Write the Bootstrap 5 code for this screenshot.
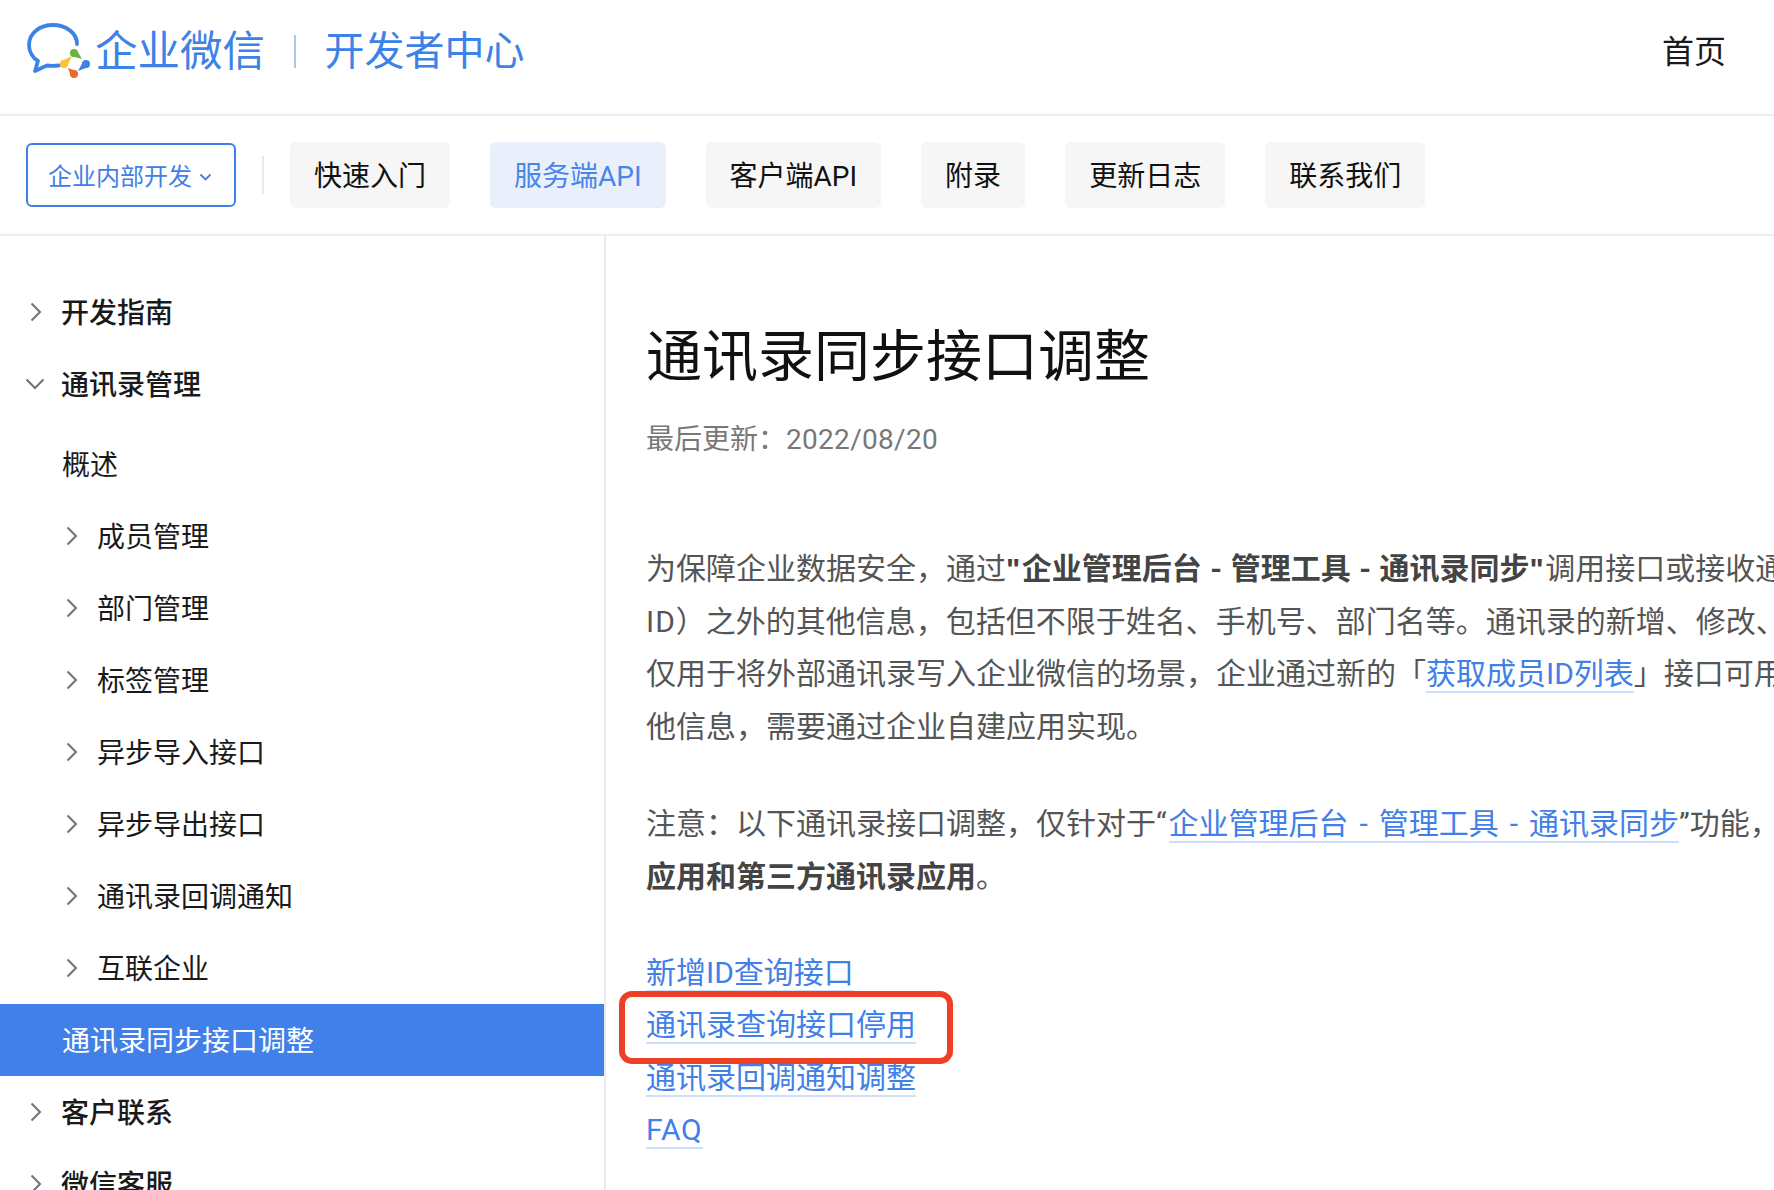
<!DOCTYPE html>
<html lang="zh-CN">
<head>
<meta charset="utf-8">
<title>通讯录同步接口调整</title>
<link href="https://cdn.jsdelivr.net/npm/bootstrap@5.3.0/dist/css/bootstrap.min.css" rel="stylesheet">
<style>
html,body{height:100%;overflow:hidden;}
body{font-family:Roboto,"Noto Sans CJK SC",sans-serif;color:#1a1a1a;background:#fff;font-size:28px;}
.wx-top{height:116px;border-bottom:2px solid #eee;padding:0 48px 11px 26px;}
.wx-logo-icon{width:64px;height:60px;margin-top:-3px;}
.wx-brand{font-size:42.5px;line-height:56px;color:#3d82e6;margin-left:5px;}
.wx-brand-sep{width:2px;height:33px;background:#a8c8f2;margin:0 28.5px 0 29px;}
.wx-brand-sub{font-size:40px;line-height:56px;color:#3d82e6;}
.wx-home{font-size:32px;line-height:40px;color:#1a1a1a;text-decoration:none;}
.wx-sub{height:120px;border-bottom:2px solid #eee;padding:0 26px;}
.wx-scope{width:210px;height:64px;border:2px solid #3f80e8;border-radius:6px;color:#3f80e8;font-size:24px;padding:4px 2px 0 0;background:#fff;}
.wx-scope:hover{color:#3f80e8;background:#fff;border-color:#3f80e8;}
.wx-scope svg{width:13px;height:8px;margin-left:7px;}
.wx-sep{width:2px;height:38px;background:#e8e8e8;margin:0 26px;}
.wx-tabs{gap:40px;}
.wx-tab{height:66px;line-height:63px;padding:3px 24px 0;font-size:28px;border-radius:6px;background:#f6f6f6;color:#111;border:0;}
.wx-tab:hover{background:#f6f6f6;color:#111;}
.wx-tab-on,.wx-tab-on:hover{background:#e9f0fc;color:#4a86e8;}
.wx-body{height:954px;}
.wx-side{width:606px;flex:none;border-right:2px solid #e9e9e9;padding-top:40px;height:100%;}
.wx-item{height:72px;line-height:69px;padding-top:3px;font-size:28px;color:#1a1a1a;text-decoration:none;position:relative;white-space:nowrap;}
.wx-l0{padding-left:61px;font-weight:500;}
.wx-l1{padding-left:97px;}
.wx-l1b{padding-left:62px;}
.wx-on{background:#4080e8;color:#fff;}
.wx-subnav{padding-top:8px;}
.wx-chev{position:absolute;top:50%;transform:translateY(-50%);}
.wx-chev-r{width:12px;height:20px;left:30px;}
.wx-l1 .wx-chev-r{left:66px;}
.wx-chev-d{width:20px;height:12px;left:25px;}
.wx-main{padding:81px 0 0 40px;white-space:nowrap;min-width:0;overflow:hidden;}
.wx-title{font-size:56px;line-height:80px;font-weight:400;color:#111;margin:0 0 23px;}
.wx-date{font-size:28px;line-height:40px;color:#787878;margin:0 0 83px;}
.wx-date span{letter-spacing:.3px;}
.wx-para{font-size:30px;line-height:52.6px;color:#555;margin:0 0 45px;}
.wx-para b{font-weight:700;color:#444;word-spacing:1.1px;}
.wx-q{font-family:"Liberation Sans",sans-serif;letter-spacing:1.5px;}
.wx-lq{letter-spacing:2px;}
.wx-idfix{letter-spacing:1px;}
.wx-link{color:#4080e8;text-decoration:none;border-bottom:2px solid #cddffa;}
.wx-para .wx-link{word-spacing:3.5px;}
.wx-faq{letter-spacing:.8px;}
.wx-links{font-size:30px;line-height:52.6px;margin-top:43px;position:relative;width:max-content;}
.wx-mark{position:absolute;left:-27px;top:44px;width:334px;height:73px;border:6px solid #ee4024;border-radius:13px;pointer-events:none;}
</style>
</head>
<body>
<header class="wx-top d-flex align-items-center justify-content-between">
  <div class="d-flex align-items-center">
    <svg class="wx-logo-icon" viewBox="0 0 64 60" xmlns="http://www.w3.org/2000/svg">
      <path d="M51 24 C51 13 40 5 27 5 C14 5 3 13 3 25 C3 32 7 38 12 41 L9 51 L21 45.500 C24.500 46 28 46 33 45.500" fill="none" stroke="#3d82e6" stroke-width="3.800" stroke-linejoin="round" stroke-linecap="round"/>
      <circle cx="48" cy="33" r="4" fill="#6ab43c"/><polygon points="45.600,36.200 50.400,29.800 56,39" fill="#6ab43c"/>
      <circle cx="60" cy="44" r="4" fill="#3d82e6"/><polygon points="62.600,47 57.400,41 52,51" fill="#3d82e6"/>
      <circle cx="48" cy="54" r="4" fill="#ec6a24"/><polygon points="50.800,51.200 45.200,56.800 42,48" fill="#ec6a24"/>
      <circle cx="38" cy="44" r="4" fill="#f7c437"/><polygon points="40.800,46.800 35.200,41.200 46,36" fill="#f7c437"/>
    </svg>
    <span class="wx-brand">企业微信</span>
    <span class="wx-brand-sep"></span>
    <span class="wx-brand-sub">开发者中心</span>
  </div>
  <a class="wx-home" href="#">首页</a>
</header>
<div class="wx-sub d-flex align-items-center">
  <button type="button" class="btn wx-scope d-flex align-items-center justify-content-center">企业内部开发<svg viewBox="0 0 13 8"><path d="M1.500 1.500 L6.500 6.500 L11.500 1.500" fill="none" stroke="#3f80e8" stroke-width="1.800"/></svg></button>
  <span class="wx-sep"></span>
  <nav class="d-flex wx-tabs">
    <a class="btn wx-tab" href="#">快速入门</a>
    <a class="btn wx-tab wx-tab-on" href="#">服务端API</a>
    <a class="btn wx-tab" href="#">客户端API</a>
    <a class="btn wx-tab" href="#">附录</a>
    <a class="btn wx-tab" href="#">更新日志</a>
    <a class="btn wx-tab" href="#">联系我们</a>
  </nav>
</div>
<div class="wx-body d-flex">
  <aside class="wx-side">
    <a class="wx-item wx-l0 d-block" href="#"><svg class="wx-chev wx-chev-r" viewBox="0 0 12 20"><path d="M1.500 1.500 L10 10 L1.500 18.500" fill="none" stroke="#6f7278" stroke-width="2"/></svg>开发指南</a>
    <a class="wx-item wx-l0 d-block" href="#"><svg class="wx-chev wx-chev-d" viewBox="0 0 20 12"><path d="M1.500 1.500 L10 10 L18.500 1.500" fill="none" stroke="#6f7278" stroke-width="2"/></svg>通讯录管理</a>
    <div class="wx-subnav">
      <a class="wx-item wx-l1b d-block" href="#">概述</a>
      <a class="wx-item wx-l1 d-block" href="#"><svg class="wx-chev wx-chev-r" viewBox="0 0 12 20"><path d="M1.500 1.500 L10 10 L1.500 18.500" fill="none" stroke="#6f7278" stroke-width="2"/></svg>成员管理</a>
      <a class="wx-item wx-l1 d-block" href="#"><svg class="wx-chev wx-chev-r" viewBox="0 0 12 20"><path d="M1.500 1.500 L10 10 L1.500 18.500" fill="none" stroke="#6f7278" stroke-width="2"/></svg>部门管理</a>
      <a class="wx-item wx-l1 d-block" href="#"><svg class="wx-chev wx-chev-r" viewBox="0 0 12 20"><path d="M1.500 1.500 L10 10 L1.500 18.500" fill="none" stroke="#6f7278" stroke-width="2"/></svg>标签管理</a>
      <a class="wx-item wx-l1 d-block" href="#"><svg class="wx-chev wx-chev-r" viewBox="0 0 12 20"><path d="M1.500 1.500 L10 10 L1.500 18.500" fill="none" stroke="#6f7278" stroke-width="2"/></svg>异步导入接口</a>
      <a class="wx-item wx-l1 d-block" href="#"><svg class="wx-chev wx-chev-r" viewBox="0 0 12 20"><path d="M1.500 1.500 L10 10 L1.500 18.500" fill="none" stroke="#6f7278" stroke-width="2"/></svg>异步导出接口</a>
      <a class="wx-item wx-l1 d-block" href="#"><svg class="wx-chev wx-chev-r" viewBox="0 0 12 20"><path d="M1.500 1.500 L10 10 L1.500 18.500" fill="none" stroke="#6f7278" stroke-width="2"/></svg>通讯录回调通知</a>
      <a class="wx-item wx-l1 d-block" href="#"><svg class="wx-chev wx-chev-r" viewBox="0 0 12 20"><path d="M1.500 1.500 L10 10 L1.500 18.500" fill="none" stroke="#6f7278" stroke-width="2"/></svg>互联企业</a>
      <a class="wx-item wx-l1b wx-on d-block" href="#">通讯录同步接口调整</a>
    </div>
    <a class="wx-item wx-l0 d-block" href="#"><svg class="wx-chev wx-chev-r" viewBox="0 0 12 20"><path d="M1.500 1.500 L10 10 L1.500 18.500" fill="none" stroke="#6f7278" stroke-width="2"/></svg>客户联系</a>
    <a class="wx-item wx-l0 d-block" href="#"><svg class="wx-chev wx-chev-r" viewBox="0 0 12 20"><path d="M1.500 1.500 L10 10 L1.500 18.500" fill="none" stroke="#6f7278" stroke-width="2"/></svg>微信客服</a>
  </aside>
  <main class="wx-main flex-grow-1">
    <h1 class="wx-title">通讯录同步接口调整</h1>
    <p class="wx-date">最后更新：<span>2022/08/20</span></p>
    <p class="wx-para">为保障企业数据安全，通过<b><span class="wx-q">"</span>企业管理后台 - 管理工具 - 通讯录同步<span class="wx-q">"</span></b>调用接口或接收通<br><span class="wx-idfix">ID</span>）之外的其他信息，包括但不限于姓名、手机号、部门名等。通讯录的新增、修改、<br>仅用于将外部通讯录写入企业微信的场景，企业通过新的「<a class="wx-link" href="#">获取成员ID列表</a>」接口可用<br>他信息，需要通过企业自建应用实现。</p>
    <p class="wx-para mb-0">注意：以下通讯录接口调整，仅针对于<span class="wx-lq">“</span><a class="wx-link" href="#">企业管理后台 - 管理工具 - 通讯录同步</a>”功能，<br><b>应用和第三方通讯录应用</b>。</p>
    <div class="wx-links">
      <div><a class="wx-link" href="#">新增ID查询接口</a></div>
      <div><a class="wx-link" href="#">通讯录查询接口停用</a></div>
      <div><a class="wx-link" href="#">通讯录回调通知调整</a></div>
      <div><a class="wx-link wx-faq" href="#">FAQ</a></div>
      <span class="wx-mark"></span>
    </div>
  </main>
</div>
<script src="https://cdn.jsdelivr.net/npm/bootstrap@5.3.0/dist/js/bootstrap.bundle.min.js"></script>
</body>
</html>
